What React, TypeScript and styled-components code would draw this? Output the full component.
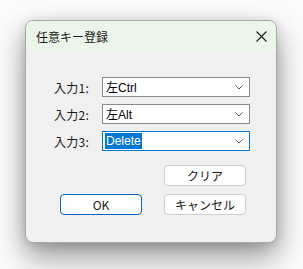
import React from 'react';
import styled, { createGlobalStyle } from 'styled-components';

const GlobalStyle = createGlobalStyle`
  html, body {
    margin: 0;
    padding: 0;
    background: #fbfbfb;
  }
  body {
    font-family: "Noto Sans CJK JP", "Liberation Sans", sans-serif;
  }
`;

const Page = styled.div`
  width: 303px;
  height: 269px;
  padding: 20px 0 0 25px;
  box-sizing: border-box;
  overflow: hidden;
`;

const Dialog = styled.div`
  width: 252px;
  height: 223px;
  border-radius: 8px;
  background: #f0f0f0;
  border: 1px solid #a9a9a9;
  box-sizing: border-box;
  box-shadow: 0 14px 30px rgba(0, 0, 0, 0.4), 0 2px 12px rgba(0, 0, 0, 0.14);
  overflow: hidden;
  display: flex;
  flex-direction: column;
`;

const TitleBar = styled.div`
  height: 31px;
  background: #ebf5ea;
  display: flex;
  align-items: center;
  justify-content: space-between;
  padding: 0 9px 0 10px;
  font-size: 12px;
  color: #1a1a1a;
`;

const CloseIcon = styled.svg`
  width: 11px;
  height: 11px;
`;

const Body = styled.div`
  padding: 25px 26px 0 28px;
  display: flex;
  flex-direction: column;
`;

const Row = styled.div`
  display: flex;
  align-items: center;
  height: 20px;
  margin-bottom: 7px;
`;

const Label = styled.span`
  width: 48px;
  font-size: 12px;
  color: #1a1a1a;
  letter-spacing: 0.3px;
`;

const Combo = styled.div<{ $focused?: boolean }>`
  width: 148px;
  height: 20px;
  box-sizing: border-box;
  background: #ffffff;
  border: 1px solid ${(p) => (p.$focused ? '#0078d4' : '#8a8a8a')};
  display: flex;
  align-items: center;
  justify-content: space-between;
  padding: 0 6px 0 2px;
  font-size: 12px;
  color: #000;
`;

const Value = styled.span<{ $selected?: boolean }>`
  font-family: "Liberation Sans", "Noto Sans CJK JP", sans-serif;
  line-height: 16px;
  padding: 0 1px;
  background: ${(p) => (p.$selected ? '#0078d7' : 'transparent')};
  color: ${(p) => (p.$selected ? '#ffffff' : '#000')};
`;

const Jp = styled.span`
  font-family: "Noto Sans CJK JP", sans-serif;
`;

const Chevron = styled.svg`
  width: 8px;
  height: 5px;
`;

const ButtonGrid = styled.div`
  display: grid;
  grid-template-columns: 82px 82px;
  column-gap: 22px;
  row-gap: 8px;
  margin: 7px 0 0 6px;
`;

const Button = styled.button<{ $primary?: boolean }>`
  height: 21px;
  box-sizing: border-box;
  border-radius: 4px;
  background: #fdfdfd;
  border: 1px solid ${(p) => (p.$primary ? '#0067c0' : '#d0d0d0')};
  font-family: "Noto Sans CJK JP", "Liberation Sans", sans-serif;
  font-size: 12px;
  color: #1a1a1a;
  padding: 0;
  display: flex;
  align-items: center;
  justify-content: center;
`;

const Spacer = styled.div``;

const ChevronDown = () => (
  <Chevron viewBox="0 0 8 5">
    <path d="M0.5 0.5 L4 4 L7.5 0.5" fill="none" stroke="#5a5a5a" strokeWidth="1" />
  </Chevron>
);

export default function App() {
  return (
    <Page>
      <GlobalStyle />
      <Dialog>
        <TitleBar>
          <span>任意キー登録</span>
          <CloseIcon viewBox="0 0 11 11">
            <path d="M0.5 0.5 L10.5 10.5 M10.5 0.5 L0.5 10.5" stroke="#1a1a1a" strokeWidth="1.1" />
          </CloseIcon>
        </TitleBar>
        <Body>
          <Row>
            <Label>入力1:</Label>
            <Combo>
              <Value><Jp>左</Jp>Ctrl</Value>
              <ChevronDown />
            </Combo>
          </Row>
          <Row>
            <Label>入力2:</Label>
            <Combo>
              <Value><Jp>左</Jp>Alt</Value>
              <ChevronDown />
            </Combo>
          </Row>
          <Row>
            <Label>入力3:</Label>
            <Combo $focused>
              <Value $selected>Delete</Value>
              <ChevronDown />
            </Combo>
          </Row>
          <ButtonGrid>
            <Spacer />
            <Button>クリア</Button>
            <Button $primary>OK</Button>
            <Button>キャンセル</Button>
          </ButtonGrid>
        </Body>
      </Dialog>
    </Page>
  );
}
